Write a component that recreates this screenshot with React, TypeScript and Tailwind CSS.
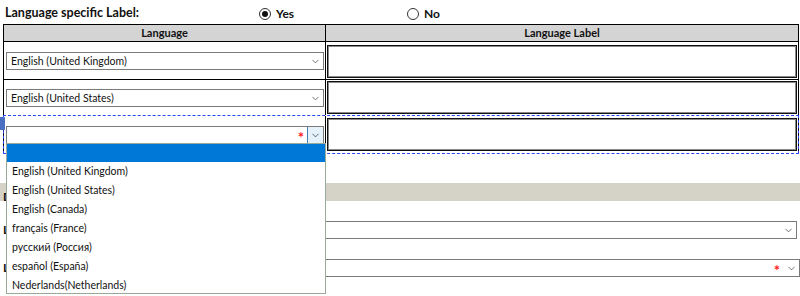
import { ChevronDown } from "lucide-react";

const font = { fontFamily: 'Lato, "Open Sans", Arial, sans-serif' };

const options = [
  "English (United Kingdom)",
  "English (United States)",
  "English (Canada)",
  "français (France)",
  "русский (Россия)",
  "español (España)",
  "Nederlands(Netherlands)",
];

const Radio = ({ label, checked }: { label: string; checked?: boolean }) => (
  <div className="flex items-center gap-[5px]">
    <span className="w-[12px] h-[12px] rounded-full border border-[#333] bg-white flex items-center justify-center">
      {checked && <span className="w-[6px] h-[6px] rounded-full bg-[#111]" />}
    </span>
    <span className="text-[12px] font-bold text-[#111]">{label}</span>
  </div>
);

const Select = ({ value, required, focused }: { value?: string; required?: boolean; focused?: boolean }) => (
  <div className="h-[18px] border border-[#7a7a7a] bg-white flex items-center">
    <span className="flex-1 pl-[4px] text-[10.5px] text-[#111] leading-[14px] whitespace-nowrap">{value}</span>
    {required && <span className="text-[#ff1a1a] text-[15px] font-bold leading-none mr-[3px] mt-[4px]">*</span>}
    {focused ? (
      <span className="w-[16px] h-full bg-[#e5f1fb] border-l border-[#3c7fb1] flex items-center justify-center">
        <ChevronDown size={11} strokeWidth={1.6} className="text-[#333]" />
      </span>
    ) : (
      <span className="w-[16px] h-full flex items-center justify-center">
        <ChevronDown size={11} strokeWidth={1.6} className="text-[#444]" />
      </span>
    )}
  </div>
);

const TextBox = () => (
  <div className="h-[33px] border border-[#111] bg-white shadow-[inset_0_0_0_1px_#8a8a8a]" />
);

export default function App() {
  return (
    <div className="relative w-[800px] h-[296px] overflow-hidden bg-white" style={font}>
      {/* top line with radios */}
      <div className="h-[24px] flex items-center">
        <div className="w-[259px] pl-[5px] pt-[2px] text-[12.5px] font-bold text-[#111]">Language specific Label:</div>
        <div className="w-[148px] pt-[4px]">
          <Radio label="Yes" checked />
        </div>
        <div className="pt-[4px]">
          <Radio label="No" />
        </div>
      </div>

      {/* table */}
      <div className="ml-[3px] w-[796px] border-l border-r border-t border-black">
        <div className="grid grid-cols-[322px_1fr] h-[17px] bg-[#d4d4d4] border-b border-black">
          <div className="flex items-center justify-center text-[11px] font-bold text-[#111] border-r border-black">Language</div>
          <div className="flex items-center justify-center text-[11px] font-bold text-[#111]">Language Label</div>
        </div>

        <div className="grid grid-cols-[322px_1fr] h-[38px] border-b border-black">
          <div className="border-r border-black pl-[2px] pr-[1px] pt-[10px]">
            <Select value="English (United Kingdom)" />
          </div>
          <div className="px-[1px] pt-[3px]">
            <TextBox />
          </div>
        </div>

        <div className="grid grid-cols-[322px_1fr] h-[35px]">
          <div className="border-r border-black pl-[2px] pr-[1px] pt-[9px]">
            <Select value="English (United States)" />
          </div>
          <div className="px-[1px] pt-[1px]">
            <TextBox />
          </div>
        </div>

        <div className="grid grid-cols-[322px_1fr] h-[39px] border border-dashed border-[#2a46f0] -mx-px">
          <div className="border-r border-black pl-[2px] pr-[1px] pt-[10px]">
            <Select required focused />
          </div>
          <div className="px-[1px] pt-[2px]">
            <TextBox />
          </div>
        </div>
      </div>

      {/* form below */}
      <div className="mt-[29px] h-[18px] bg-[#d5d2c8]">
        <span className="pl-[3px] text-[12px] font-bold text-[#111]">D</span>
      </div>
      <div className="mt-[20px] flex items-center gap-[4px]">
        <span className="pl-[3px] w-[140px] text-[12px] font-bold text-[#111]">L</span>
        <div className="w-[653px]">
          <Select />
        </div>
      </div>
      <div className="mt-[20px] flex items-center gap-[4px]">
        <span className="pl-[3px] w-[140px] text-[12px] font-bold text-[#111]">L</span>
        <div className="w-[656px]">
          <Select required />
        </div>
      </div>

      {/* focus tab */}
      <div className="absolute left-0 top-[117px] w-[5px] h-[13px] bg-[#4a6fc0] rounded-r-[1px]" />

      {/* open dropdown list */}
      <div className="absolute left-[6px] top-[143px] w-[320px] h-[151px] bg-white border border-[#9aaa9a]">
        <div className="h-[18px] bg-[#0078d7]" />
        {options.map((o) => (
          <div key={o} className="h-[19px] flex items-center pl-[5px] text-[10.5px] text-[#111]">
            {o}
          </div>
        ))}
      </div>
    </div>
  );
}
